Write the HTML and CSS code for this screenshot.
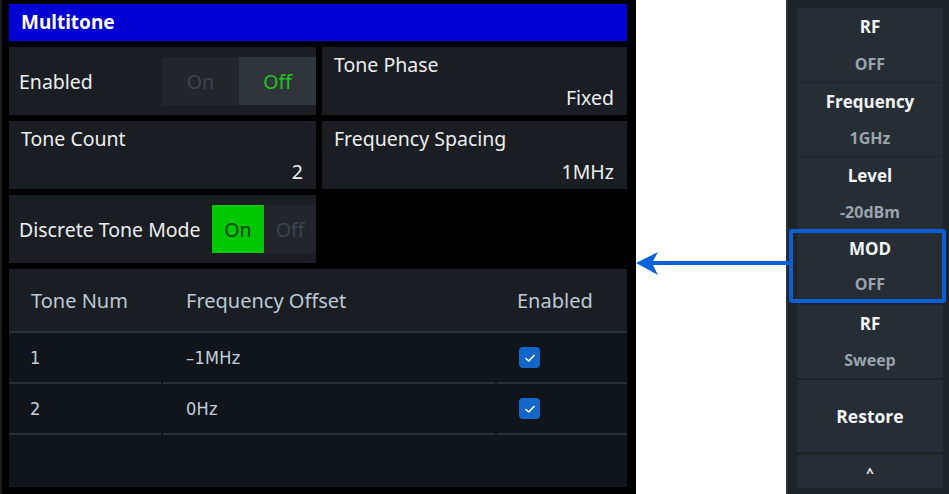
FILE: index.html
```html
<!DOCTYPE html>
<html lang="en">
<head>
    <meta charset="UTF-8">
    <meta name="viewport" content="width=device-width, initial-scale=1.0">
    <title>Multitone</title>
    <link rel="stylesheet" href="styles.css">
</head>
<body>

<div class="screen">
    <div class="panel">
        <div class="title">Multitone</div>

        <div class="params">
            <div class="cell row-cell">
                <span class="label">Enabled</span>
                <div class="toggle wide">
                    <span class="opt dim">On</span>
                    <span class="opt sel-off">Off</span>
                </div>
            </div>
            <div class="cell">
                <span class="label">Tone Phase</span>
                <span class="value">Fixed</span>
            </div>
            <div class="cell">
                <span class="label">Tone Count</span>
                <span class="value">2</span>
            </div>
            <div class="cell">
                <span class="label">Frequency Spacing</span>
                <span class="value">1MHz</span>
            </div>
            <div class="cell row-cell">
                <span class="label">Discrete Tone Mode</span>
                <div class="toggle narrow">
                    <span class="opt sel-on">On</span>
                    <span class="opt dim">Off</span>
                </div>
            </div>
        </div>

        <div class="tone-table">
            <div class="th">Tone Num</div>
            <div class="th">Frequency Offset</div>
            <div class="th">Enabled</div>

            <div class="td num">1</div>
            <div class="td num">–1MHz</div>
            <div class="td"><span class="check"><svg viewBox="0 0 20 20" width="20" height="20"><path d="M6 10.5 L8.8 13 L14 7.5" fill="none" stroke="#fff" stroke-width="1.6" stroke-linecap="round" stroke-linejoin="round"/></svg></span></div>

            <div class="td num">2</div>
            <div class="td num">0Hz</div>
            <div class="td"><span class="check"><svg viewBox="0 0 20 20" width="20" height="20"><path d="M6 10.5 L8.8 13 L14 7.5" fill="none" stroke="#fff" stroke-width="1.6" stroke-linecap="round" stroke-linejoin="round"/></svg></span></div>
        </div>
    </div>

    <div class="gap"></div>

    <div class="softkeys">
        <div class="key k74"><span class="k-title">RF</span><span class="k-val">OFF</span></div>
        <div class="key"><span class="k-title">Frequency</span><span class="k-val">1GHz</span></div>
        <div class="key"><span class="k-title">Level</span><span class="k-val">-20dBm</span></div>
        <div class="key mod"><span class="k-title">MOD</span><span class="k-val">OFF</span></div>
        <div class="key sweep"><span class="k-title">RF</span><span class="k-val">Sweep</span></div>
        <div class="key single"><span class="k-title">Restore</span></div>
        <div class="key caret"><span class="k-title">^</span></div>
    </div>

    <!-- callout arrow pointing from MOD key to the panel -->
    <svg class="arrow" width="165" height="30" viewBox="0 0 165 30">
        <line x1="18" y1="13" x2="157" y2="13" stroke="#0a62d8" stroke-width="4" stroke-linecap="round"/>
        <polygon points="5,13 27,2 21,13 27,25" fill="#0a62d8"/>
    </svg>
</div>

</body>
</html>
```

FILE: styles.css
```css
body {
    margin: 0;
    background: #fff;
    font-family: 'Noto Sans', 'Open Sans', sans-serif;
}

.screen {
    position: relative;
    display: flex;
    width: 949px;
    height: 494px;
    overflow: hidden;
}

/* --- left: multitone panel --- */
.panel {
    width: 618px;
    background: #000;
    border-left: 2px solid #1c1d1f;
    padding: 4px 9px 0 7px;
    display: flex;
    flex-direction: column;
}

.title {
    height: 37px;
    background: #0000d2;
    color: #fff;
    font-weight: bold;
    font-size: 19px;
    line-height: 37px;
    padding-left: 12px;
    box-sizing: border-box;
}

.params {
    display: grid;
    grid-template-columns: 307px 305px;
    grid-auto-rows: 68px;
    column-gap: 6px;
    row-gap: 6px;
    margin-top: 6px;
}

.cell {
    background: #1a1d21;
    position: relative;
    color: #eceff2;
    font-size: 19.5px;
}

.cell .label {
    position: absolute;
    left: 12px;
    top: 4px;
}

.cell .value {
    position: absolute;
    right: 13px;
    bottom: 4px;
}

.row-cell {
    display: flex;
    align-items: center;
    justify-content: space-between;
}

.row-cell .label { position: static; padding-left: 10px; }

.toggle {
    display: flex;
    height: 48px;
    align-self: center;
}

.toggle.wide .opt { width: 77px; }
.toggle.narrow .opt { width: 52px; }

.opt {
    display: flex;
    align-items: center;
    justify-content: center;
    font-size: 19.5px;
}

.opt.dim { background: #22262b; color: #3e444b; }
.opt.sel-off { background: #30353b; color: #22c322; }
.opt.sel-on { background: #00c800; color: #0b3d0b; }

/* --- tone table --- */
.tone-table {
    display: grid;
    grid-template-columns: 152px 332px 130px;
    grid-template-rows: 64px 51px 51px 1fr;
    column-gap: 2px;
    margin-top: 6px;
    height: 218px;
    background: #10151b;
}

.th {
    background: #1a1d21;
    color: #bdc9d4;
    font-size: 20px;
    display: flex;
    align-items: center;
    border-bottom: 2px solid #2c3137;
    padding-left: 22px;
    margin-right: -2px;
}

.th:nth-child(2) { padding-left: 23px; }
.th:nth-child(3) { padding-left: 20px; margin-right: 0; }

.td {
    display: flex;
    align-items: center;
    border-bottom: 2px solid #2b3036;
    padding-left: 23px;
    color: #c3cfd9;
    font-size: 18px;
}

.td:nth-child(3n+1) { padding-left: 21px; }
.td:nth-child(3n) { padding-left: 22px; }

.num {
    font-family: 'DejaVu Sans', sans-serif;
    font-stretch: condensed;
    letter-spacing: 0.3px;
}

.check {
    width: 21px;
    height: 21px;
    background: #1466c8;
    border-radius: 4px;
    display: flex;
    align-items: center;
    justify-content: center;
}

/* --- gap + softkey column --- */
.gap { width: 153px; background: #fff; }

.softkeys {
    width: 149px;
    background: #1e2328;
    border-left: 2px solid #2a3037;
    padding: 8px 6px 0 9px;
    display: flex;
    flex-direction: column;
    gap: 1px;
    font-family: 'Open Sans', 'Noto Sans', sans-serif;
}

.key {
    position: relative;
    height: 73px;
    background: #262d34;
    display: flex;
    flex-direction: column;
    font-weight: bold;
    text-align: center;
}

.key.k74 { height: 74px; }
.key.mod { height: 70px; }
.key.sweep { margin-top: 3px; }
.key.single { height: 72px; margin-top: 1px; justify-content: center; }
.key.caret { height: 33px; margin-top: 2px; justify-content: center; }

.key .k-title,
.key .k-val {
    flex: 1;
    display: flex;
    align-items: center;
    justify-content: center;
}

.k-title { color: #f4f6f8; font-size: 17px; }
.k-val { color: #98a4ae; font-size: 16px; }

.key.single .k-title { flex: 0 0 auto; font-size: 17.5px; }
.key.caret .k-title { flex: 0 0 auto; font-size: 13px; }

.key.mod::after {
    content: '';
    position: absolute;
    left: -8px;
    right: -3px;
    top: -2px;
    bottom: -2px;
    border: 4px solid #0a5fd6;
    border-radius: 3px;
}

.arrow {
    position: absolute;
    left: 631px;
    top: 250px;
}
```
